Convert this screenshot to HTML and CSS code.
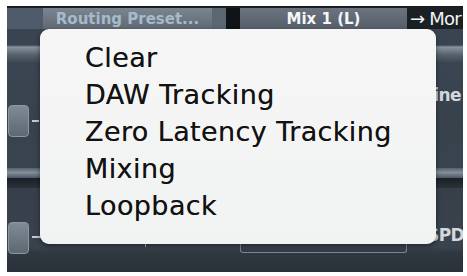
FILE: index.html
```html
<!DOCTYPE html>
<html>
<head>
<meta charset="utf-8">
<link rel="stylesheet" href="styles.css">
</head>
<body>
<div class="panel">
  <div class="topbar">
    <div class="strip"></div>
    <div class="btn preset">Routing Preset...</div>
    <div class="sep"></div>
    <div class="gap"></div>
    <div class="btn mix">Mix 1 (L)</div>
    <div class="more">→ Mor</div>
  </div>
  <div class="row r1">
    <div class="knob"></div><div class="tick"></div>
    <div class="fill"></div>
    <div class="label">ine</div>
  </div>
  <div class="band"></div>
  <div class="darkband"></div>
  <div class="row r2">
    <div class="knob"></div><div class="tick wide"></div>
    <div class="vtick"></div>
    <div class="fill"></div>
    <div class="outline"></div>
    <div class="label spd">SPD</div>
  </div>
  <div class="menu">
    <div class="item">Clear</div>
    <div class="item">DAW Tracking</div>
    <div class="item">Zero Latency Tracking</div>
    <div class="item">Mixing</div>
    <div class="item">Loopback</div>
  </div>
</div>
</body>
</html>
```
FILE: styles.css
```css
html, body { margin: 0; padding: 0; background: #ffffff; }
body { width: 467px; height: 276px; overflow: hidden; font-family: "DejaVu Sans", "Liberation Sans", sans-serif; }
.panel {
  position: relative;
  margin: 6px 0 0 7px;
  width: 456px;
  height: 265px;
  background: #36404b;
  border-top: 1px solid #15191d;
  overflow: hidden;
  display: flex;
  flex-direction: column;
}
.topbar { display: flex; height: 22px; flex: none; background: #1b2025; padding-top: 1px; box-sizing: border-box; }
.strip { width: 36px; background: #4d5b6a; }
.btn {
  height: 21px; display: flex; align-items: center; justify-content: center;
  font-weight: bold;
  background: linear-gradient(#7b858f, #5f6873);
}
.preset { width: 169px; color: #a7bacb; font-size: 15px; letter-spacing: 0; }
.sep { width: 14px; background: #5a6672; }
.gap { width: 14px; background: #111417; }
.mix { width: 167px; color: #f4f6f8; font-size: 15px; background: linear-gradient(#6b747e, #565f69); }
.more { flex: 1; color: #f2f4f6; font-size: 18px; display: flex; align-items: center; padding-left: 3px; letter-spacing: -0.8px; white-space: nowrap; overflow: hidden; }
.row { position: relative; display: flex; align-items: flex-start; flex: none; }
.r1 {
  height: 139px;
  background: linear-gradient(#3a4450 0, #3a4450 16px, #87929c 18px, #56616d 26px, #3b4551 34px, #38424d 70%, #3a4450 100%);
}
.r2 {
  flex: 1;
  background: linear-gradient(#363f4a, #39434e 70%, #2f3740 78%, #2a3139 100%);
}
.knob {
  width: 21px; height: 32px; margin-left: 1px;
  border-radius: 4px;
  background: linear-gradient(#808a95, #5e6873);
  border: 1px solid #8d97a2;
  box-sizing: border-box;
}
.r1 .knob { margin-top: 76px; }
.r2 .knob { margin-top: 34px; }
.tick { width: 7px; height: 2px; background: #c5cad0; margin-left: 3px; }
.tick.wide { width: 10px; }
.r1 .tick { margin-top: 91px; }
.r2 .tick { margin-top: 48px; }
.vtick { width: 1px; height: 9px; background: #aab2ba; margin-left: 103px; margin-top: 50px; }
.fill { flex: 1; }
.label { color: #d3d8de; font-size: 17px; font-weight: bold; margin-right: 2px; letter-spacing: -0.6px; white-space: nowrap; }
.r1 .label { margin-top: 56px; }
.r2 .label { margin-top: 37px; }
.label.spd { margin-right: -1px; }
.band { height: 10px; flex: none; background: linear-gradient(#55616e, #838e98 45%, #4d5865); }
.darkband { height: 10px; flex: none; background: linear-gradient(#1a1f25, #2b323a); }
.outline {
  position: absolute; left: 233px; top: 50px;
  width: 167px; height: 15px;
  border: 1px solid #7d8690; border-top: none;
  border-radius: 0 0 3px 3px;
  box-sizing: border-box;
}
.menu {
  position: absolute;
  left: 33px; top: 22px;
  width: 396px; height: 215px;
  background: linear-gradient(#f6f6f6, #f1f2f2);
  border-radius: 9px;
  box-shadow: 0 2px 5px rgba(0,0,0,0.45);
  padding: 10px 0 0 45px;
  box-sizing: border-box;
}
.item {
  font-family: "DejaVu Sans", "Noto Sans", sans-serif;
  font-size: 27px;
  line-height: 37px;
  color: #121212;
  letter-spacing: 0.4px;
  text-shadow: 0 0 0.6px rgba(0,0,0,0.6);
}
```
